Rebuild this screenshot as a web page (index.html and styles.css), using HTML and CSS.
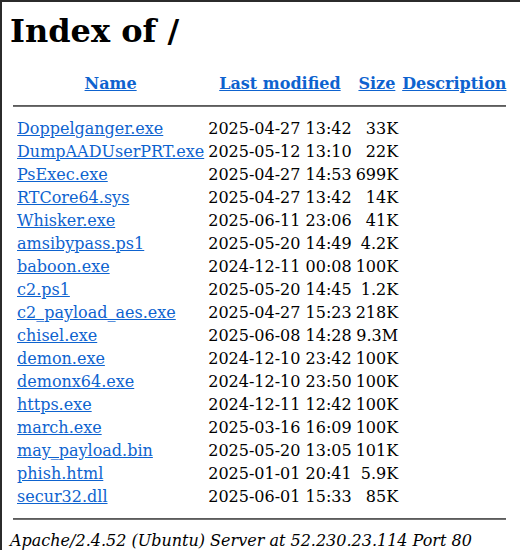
FILE: index.html
```html
<!DOCTYPE html>
<html>
<head>
    <meta charset="UTF-8">
    <title>Index of /</title>
    <link rel="stylesheet" href="styles.css">
</head>
<body>
<div class="frame">
    <h1>Index of /</h1>
    <table class="listing">
        <tr><th class="icon"></th><th><a href="?C=N;O=D">Name</a></th><th><a href="?C=M;O=A">Last modified</a></th><th><a href="?C=S;O=A">Size</a></th><th><a href="?C=D;O=A">Description</a></th></tr>
        <tr><th colspan="5"><hr class="rule"></th></tr>
        <tr><td class="icon"></td><td><a href="Doppelganger.exe">Doppelganger.exe</a></td><td class="num">2025-04-27 13:42</td><td class="num">33K</td><td>&nbsp;</td></tr>
        <tr><td class="icon"></td><td><a href="DumpAADUserPRT.exe">DumpAADUserPRT.exe</a></td><td class="num">2025-05-12 13:10</td><td class="num">22K</td><td>&nbsp;</td></tr>
        <tr><td class="icon"></td><td><a href="PsExec.exe">PsExec.exe</a></td><td class="num">2025-04-27 14:53</td><td class="num">699K</td><td>&nbsp;</td></tr>
        <tr><td class="icon"></td><td><a href="RTCore64.sys">RTCore64.sys</a></td><td class="num">2025-04-27 13:42</td><td class="num">14K</td><td>&nbsp;</td></tr>
        <tr><td class="icon"></td><td><a href="Whisker.exe">Whisker.exe</a></td><td class="num">2025-06-11 23:06</td><td class="num">41K</td><td>&nbsp;</td></tr>
        <tr><td class="icon"></td><td><a href="amsibypass.ps1">amsibypass.ps1</a></td><td class="num">2025-05-20 14:49</td><td class="num">4.2K</td><td>&nbsp;</td></tr>
        <tr><td class="icon"></td><td><a href="baboon.exe">baboon.exe</a></td><td class="num">2024-12-11 00:08</td><td class="num">100K</td><td>&nbsp;</td></tr>
        <tr><td class="icon"></td><td><a href="c2.ps1">c2.ps1</a></td><td class="num">2025-05-20 14:45</td><td class="num">1.2K</td><td>&nbsp;</td></tr>
        <tr><td class="icon"></td><td><a href="c2_payload_aes.exe">c2_payload_aes.exe</a></td><td class="num">2025-04-27 15:23</td><td class="num">218K</td><td>&nbsp;</td></tr>
        <tr><td class="icon"></td><td><a href="chisel.exe">chisel.exe</a></td><td class="num">2025-06-08 14:28</td><td class="num">9.3M</td><td>&nbsp;</td></tr>
        <tr><td class="icon"></td><td><a href="demon.exe">demon.exe</a></td><td class="num">2024-12-10 23:42</td><td class="num">100K</td><td>&nbsp;</td></tr>
        <tr><td class="icon"></td><td><a href="demonx64.exe">demonx64.exe</a></td><td class="num">2024-12-10 23:50</td><td class="num">100K</td><td>&nbsp;</td></tr>
        <tr><td class="icon"></td><td><a href="https.exe">https.exe</a></td><td class="num">2024-12-11 12:42</td><td class="num">100K</td><td>&nbsp;</td></tr>
        <tr><td class="icon"></td><td><a href="march.exe">march.exe</a></td><td class="num">2025-03-16 16:09</td><td class="num">100K</td><td>&nbsp;</td></tr>
        <tr><td class="icon"></td><td><a href="may_payload.bin">may_payload.bin</a></td><td class="num">2025-05-20 13:05</td><td class="num">101K</td><td>&nbsp;</td></tr>
        <tr><td class="icon"></td><td><a href="phish.html">phish.html</a></td><td class="num">2025-01-01 20:41</td><td class="num">5.9K</td><td>&nbsp;</td></tr>
        <tr><td class="icon"></td><td><a href="secur32.dll">secur32.dll</a></td><td class="num">2025-06-01 15:33</td><td class="num">85K</td><td>&nbsp;</td></tr>
        <tr><th colspan="5"><hr class="rule"></th></tr>
    </table>
    <address class="server">Apache/2.4.52 (Ubuntu) Server at 52.230.23.114 Port 80</address>
</div>
</body>
</html>
```

FILE: styles.css
```css
body {
    margin: 0;
    background: #fff;
    color: #000;
    font-family: "DejaVu Serif", serif;
    font-size: 16px;
}
.frame {
    box-sizing: border-box;
    min-height: 100vh;
    border-top: 2px solid #2b2b2b;
    border-left: 2px solid #2b2b2b;
    padding: 8px 8px 0;
}
h1 {
    font-size: 32px;
    font-weight: bold;
    margin: 2px 0 21px;
}
a {
    color: #0e63cf;
    text-decoration: underline;
}
.listing {
    border-spacing: 2px;
}
.listing th,
.listing td {
    padding: 1px;
}
.listing th {
    font-weight: bold;
    text-align: center;
}
.listing .num {
    text-align: right;
}
.rule {
    margin: 8px 0;
    height: 0;
    border: none;
    border-top: 1px solid #5c5c5c;
    border-bottom: 1px solid #707070;
}
.server {
    font-style: italic;
}
```
